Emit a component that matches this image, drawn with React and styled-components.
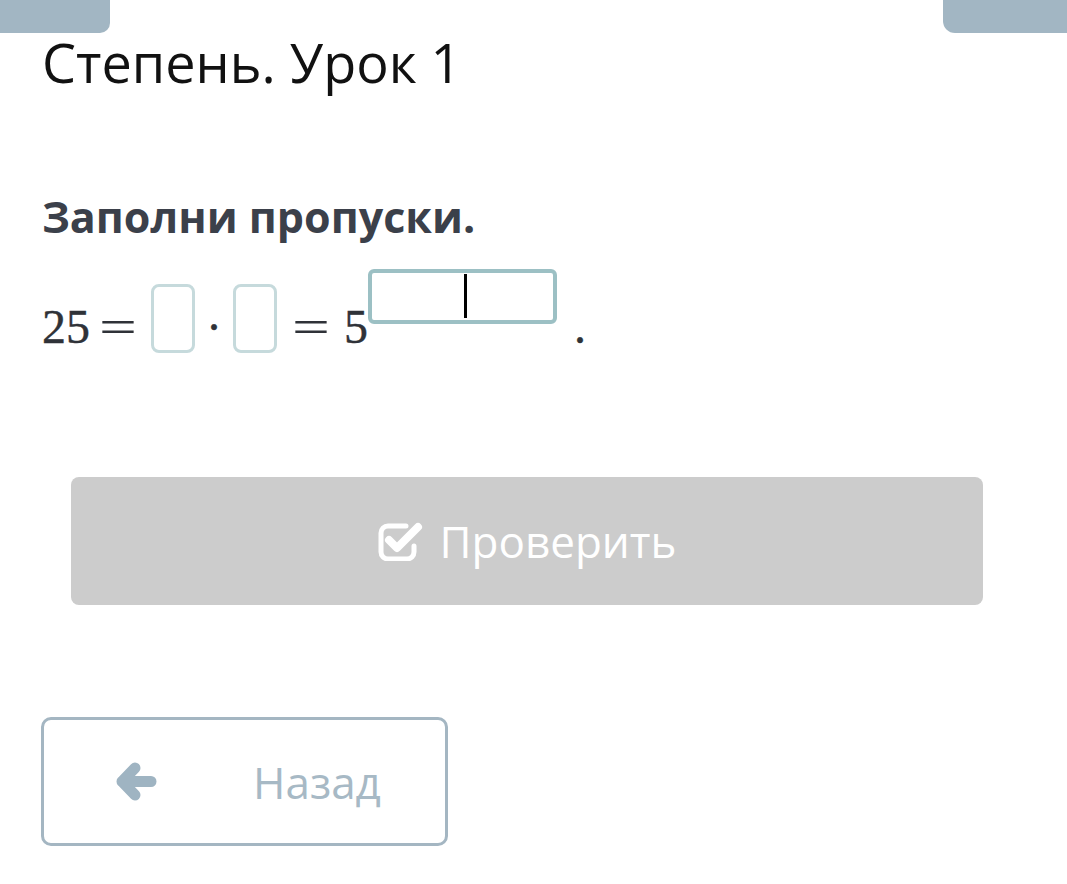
import React from "react";
import styled, { createGlobalStyle } from "styled-components";

const Global = createGlobalStyle`
  html, body { margin: 0; padding: 0; background: #ffffff; }
  body { font-family: "Open Sans", "Noto Sans", sans-serif; }
`;

const Page = styled.div`
  width: 1067px;
  min-height: 884px;
  background: #fff;
  overflow: hidden;
`;

const TabBar = styled.div`
  display: flex;
  justify-content: space-between;
  height: 33px;
`;

const Tab = styled.div`
  width: ${(p) => p.$w}px;
  height: 33px;
  background: #a2b6c3;
  border-radius: ${(p) => (p.$side === "left" ? "0 0 10px 0" : "0 0 0 12px")};
`;

const Content = styled.div`
  padding: 0 0 0 42px;
`;

const Title = styled.h1`
  margin: 0;
  font-family: "Open Sans", sans-serif;
  font-weight: 400;
  font-size: 54px;
  line-height: 58px;
  color: #111;
`;

const Task = styled.h2`
  margin: 101px 0 0 0;
  font-family: "Open Sans", sans-serif;
  font-weight: 700;
  font-size: 43px;
  line-height: 50px;
  color: #3b404a;
`;

const MathLine = styled.div`
  margin-top: 27px;
  font-family: "Liberation Serif", "Times New Roman", serif;
  font-size: 48px;
  line-height: 47px;
  color: #2f3238;
  white-space: nowrap;
  -webkit-text-stroke: 0.4px #2f3238;
`;

const Num = styled.span`
  display: inline-block;
  margin-left: ${(p) => p.$ml || 0}px;
`;

const Eq = styled.span`
  display: inline-block;
  width: 36px;
  margin-left: ${(p) => p.$ml}px;
  text-align: center;
  transform: scaleX(1.4);
  -webkit-text-stroke: 0;
`;

const Slot = styled.span`
  display: inline-block;
  box-sizing: border-box;
  width: 44px;
  height: 69px;
  margin-left: ${(p) => p.$ml || 0}px;
  margin-bottom: -10px;
  border: 3px solid #c6dadc;
  border-radius: 8px;
`;

const Dot = styled.span`
  display: inline-block;
  width: 38px;
  text-align: center;
`;

const SupBox = styled.span`
  display: inline-block;
  position: relative;
  box-sizing: border-box;
  width: 189px;
  height: 55px;
  vertical-align: 19px;
  border: 4px solid #9cc0c4;
  border-radius: 6px;
`;

const Caret = styled.span`
  position: absolute;
  left: 92px;
  top: 1px;
  width: 3px;
  height: 44px;
  background: #000;
`;

const Period = styled.span`
  display: inline-block;
  margin-left: 17px;
`;

const CheckButton = styled.button`
  display: flex;
  align-items: center;
  justify-content: center;
  gap: 17px;
  box-sizing: border-box;
  width: 912px;
  height: 128px;
  margin: 127px 0 0 29px;
  padding: 0;
  border: none;
  border-radius: 8px;
  background: #cccccc;
  color: #ffffff;
  font-family: "Open Sans", sans-serif;
  font-size: 44px;
  font-weight: 400;
  cursor: default;
`;

const BackButton = styled.button`
  display: flex;
  align-items: center;
  box-sizing: border-box;
  width: 407px;
  height: 129px;
  margin: 112px 0 0 -1px;
  padding: 0 0 0 71px;
  border: 3px solid #a4b6c2;
  border-radius: 10px;
  background: #fff;
  color: #a7b9c5;
  font-family: "Open Sans", sans-serif;
  font-size: 44px;
  font-weight: 400;
  gap: 96px;
`;

function CheckSquareIcon() {
  return (
    <svg width="45" height="40" viewBox="0 0 45 40" fill="none">
      <path
        d="M28 5 H10 A7 7 0 0 0 3 12 V31 A7 7 0 0 0 10 38 H29 A7 7 0 0 0 36 31 V25"
        stroke="#fff"
        strokeWidth="5"
        strokeLinecap="round"
      />
      <path
        d="M11 19 L19 27 L40 6"
        stroke="#fff"
        strokeWidth="8"
        strokeLinecap="round"
        strokeLinejoin="round"
      />
    </svg>
  );
}

function ArrowLeftIcon() {
  return (
    <svg width="42" height="40" viewBox="0 0 42 40" fill="none">
      <path
        d="M20 6 L7 19.5 L20 33 M7 19.5 H36"
        stroke="#9fb4c2"
        strokeWidth="11"
        strokeLinecap="round"
        strokeLinejoin="round"
      />
    </svg>
  );
}

export default function App() {
  return (
    <Page>
      <Global />
      <TabBar>
        <Tab $w={110} $side="left" />
        <Tab $w={124} $side="right" />
      </TabBar>
      <Content>
        <Title>Степень. Урок 1</Title>
        <Task>Заполни пропуски.</Task>
        <MathLine>
          <Num>25</Num>
          <Eq $ml={10}>=</Eq>
          <Slot $ml={15} />
          <Dot>·</Dot>
          <Slot />
          <Eq $ml={16}>=</Eq>
          <Num $ml={15}>5</Num>
          <SupBox>
            <Caret />
          </SupBox>
          <Period>.</Period>
        </MathLine>
        <CheckButton>
          <CheckSquareIcon />
          <span>Проверить</span>
        </CheckButton>
        <BackButton>
          <ArrowLeftIcon />
          <span>Назад</span>
        </BackButton>
      </Content>
    </Page>
  );
}
